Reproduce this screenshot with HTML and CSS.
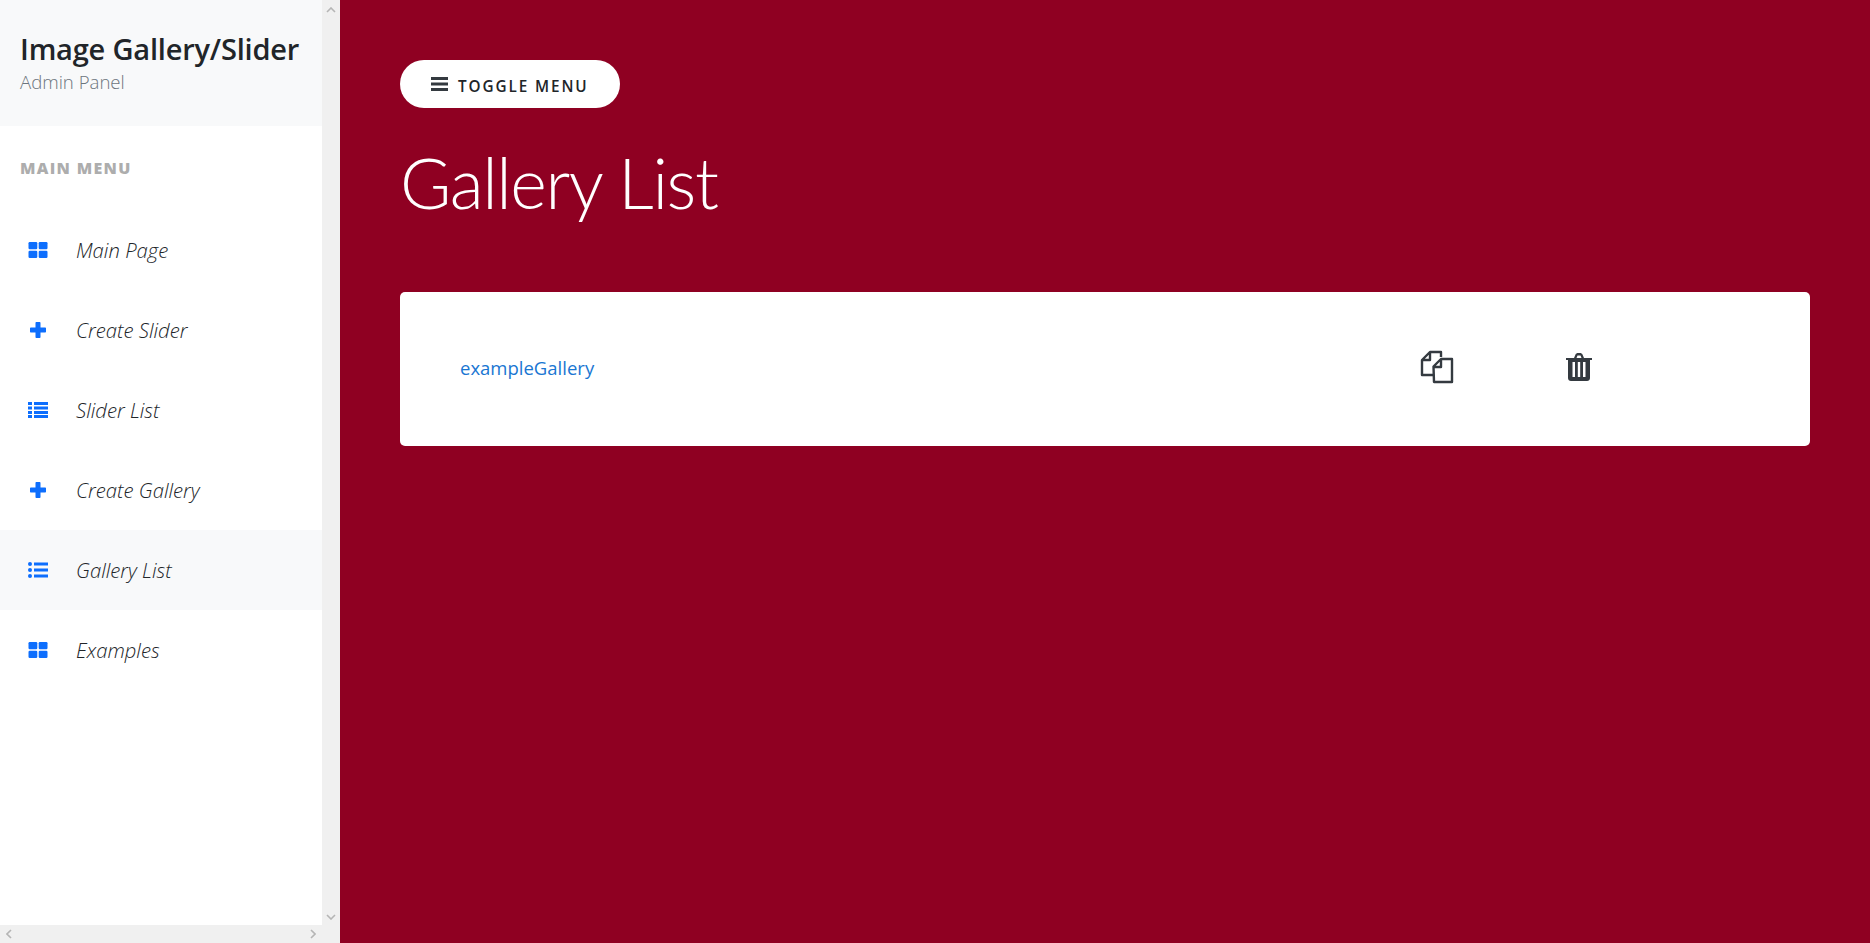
FILE: index.html
```html
<!DOCTYPE html>
<html lang="en">
<head>
    <meta charset="UTF-8">
    <meta name="viewport" content="width=device-width, initial-scale=1.0">
    <title>Gallery List</title>
    <link rel="stylesheet" href="styles.css">
</head>
<body>
    <aside class="sidebar">
        <div class="sidebar-main">
            <div class="sidebar-content">
                <div class="sidebar-header">
                    <h3>Image Gallery/Slider</h3>
                    <span>Admin Panel</span>
                </div>
                <p class="menu-title">MAIN MENU</p>
                <ul class="menu">
                    <li><a href="#"><svg class="menu-icon" viewBox="-0.5 -2 20 20"><rect width="8.800" height="7.300" rx="1.200"/><rect x="10.200" width="8.800" height="7.300" rx="1.200"/><rect y="8.700" width="8.800" height="7.300" rx="1.200"/><rect x="10.200" y="8.700" width="8.800" height="7.300" rx="1.200"/></svg>Main Page</a></li>
                    <li><a href="#"><svg class="menu-icon" viewBox="-2 -2 20 20"><path d="M6.500 0h3c.6 0 1 .4 1 1v4.500H15c.6 0 1 .4 1 1v3c0 .6-.4 1-1 1h-4.500V15c0 .6-.4 1-1 1h-3c-.6 0-1-.4-1-1v-4.500H1c-.6 0-1-.4-1-1v-3c0-.6.4-1 1-1h4.500V1c0-.6.4-1 1-1z"/></svg>Create Slider</a></li>
                    <li><a href="#"><svg class="menu-icon" viewBox="0 -2 20 20"><path d="M0 0h4v3H0zM6 0h14v3H6zM0 4.500h4v3H0zM6 4.500h14v3H6zM0 9h4v3H0zM6 9h14v3H6zM0 13h4v3H0zM6 13h14v3H6z"/></svg>Slider List</a></li>
                    <li><a href="#"><svg class="menu-icon" viewBox="-2 -2 20 20"><path d="M6.500 0h3c.6 0 1 .4 1 1v4.500H15c.6 0 1 .4 1 1v3c0 .6-.4 1-1 1h-4.500V15c0 .6-.4 1-1 1h-3c-.6 0-1-.4-1-1v-4.500H1c-.6 0-1-.4-1-1v-3c0-.6.4-1 1-1h4.500V1c0-.6.4-1 1-1z"/></svg>Create Gallery</a></li>
                    <li class="active"><a href="#"><svg class="menu-icon" viewBox="0 -2 20 20"><circle cx="2" cy="2" r="2"/><circle cx="2" cy="8" r="2"/><circle cx="2" cy="14" r="2"/><path d="M6 .500h14v3H6zM6 6.500h14v3H6zM6 12.500h14v3H6z"/></svg>Gallery List</a></li>
                    <li><a href="#"><svg class="menu-icon" viewBox="-0.5 -2 20 20"><rect width="8.800" height="7.300" rx="1.200"/><rect x="10.200" width="8.800" height="7.300" rx="1.200"/><rect y="8.700" width="8.800" height="7.300" rx="1.200"/><rect x="10.200" y="8.700" width="8.800" height="7.300" rx="1.200"/></svg>Examples</a></li>
                </ul>
            </div>
            <div class="scroll-v">
                <svg class="arrow" viewBox="0 0 10 6"><path d="M1 5l4-4 4 4"/></svg>
                <svg class="arrow" viewBox="0 0 10 6"><path d="M1 1l4 4 4-4"/></svg>
            </div>
        </div>
        <div class="scroll-h">
            <svg class="arrow-side" viewBox="0 0 6 10"><path d="M5 1L1 5l4 4"/></svg>
            <svg class="arrow-side" viewBox="0 0 6 10"><path d="M1 1l4 4-4 4"/></svg>
        </div>
    </aside>

    <main class="content">
        <button class="toggle-button">
            <svg class="bars-icon" viewBox="0 0 17 14"><path d="M0 0h17v3H0zM0 5.500h17v3H0zM0 11h17v3H0z"/></svg>
            <span class="toggle-label">TOGGLE MENU</span>
        </button>
        <h1>Gallery List</h1>
        <div class="gallery-card">
            <a class="gallery-name" href="#">exampleGallery</a>
            <a class="action copy-action" href="#">
                <svg class="copy-icon" viewBox="0 0 34 34"><path d="M21 7V2H10L2 10v15h11.500M10 2v8H2M13.500 16.500L21 9h11v23H14zM21 9v8h-7.500"/></svg>
            </a>
            <a class="action trash-action" href="#">
                <svg class="trash-icon" viewBox="0 0 26 28"><path class="trash-fill" d="M0 5h8l1.500-3.500C10 .5 11 0 12 0h2c1 0 2 .5 2.500 1.500L18 5h8v2h-2v18c0 1.700-1.300 3-3 3H5c-1.700 0-3-1.300-3-3V7H0zm10.500 0h5L14.500 2.500h-3zM6.500 9v15h2.500V9zm5.300 0v15h2.400V9zm5.200 0v15h2.500V9z"/></svg>
            </a>
        </div>
    </main>
</body>
</html>
```

FILE: styles.css
```css
* {
    box-sizing: border-box;
}
body {
    font-family: 'Open Sans', 'Noto Sans', sans-serif;
    background-color: #8f0022;
    display: flex;
    height: 100vh;
    margin: 0;
    overflow: hidden;
}
.sidebar {
    width: 340px;
    flex-shrink: 0;
    display: flex;
    flex-direction: column;
    background-color: #f0f0f0;
}
.sidebar-main {
    flex: 1;
    display: flex;
    min-height: 0;
}
.sidebar-content {
    flex: 1;
    background-color: white;
}
.sidebar-header {
    height: 126px;
    padding: 29px 20px 0;
    background-color: #f8f9fa;
}
.sidebar-header h3 {
    margin: 0;
    font-size: 29px;
    line-height: 40px;
    font-weight: 600;
    letter-spacing: -0.2px;
    color: #212529;
    white-space: nowrap;
}
.sidebar-header span {
    display: block;
    padding-top: 1px;
    font-size: 18.600px;
    line-height: 24px;
    font-weight: 300;
    color: #6c757d;
}
.menu-title {
    margin: 0;
    padding: 32px 20px 0;
    height: 84px;
    font-size: 16px;
    line-height: 20px;
    font-weight: 800;
    letter-spacing: 1.300px;
    color: #adadad;
}
.menu {
    list-style: none;
    margin: 0;
    padding: 0;
}
.menu a {
    height: 80px;
    display: flex;
    align-items: center;
    padding-left: 28px;
    font-size: 20.300px;
    font-style: italic;
    font-weight: 300;
    color: #212529;
    text-decoration: none;
}
.menu .active {
    background-color: #f8f9fa;
}
.menu-icon {
    width: 20px;
    height: 20px;
    margin: 0 28px 0 0;
    fill: #0d6efd;
    flex-shrink: 0;
}
.scroll-v {
    width: 18px;
    display: flex;
    flex-direction: column;
    justify-content: space-between;
    align-items: center;
    padding: 7px 0 5px;
}
.scroll-h {
    height: 18px;
    display: flex;
    justify-content: space-between;
    align-items: center;
    padding: 0 24px 0 6px;
}
.arrow {
    width: 10px;
    height: 6px;
    fill: none;
    stroke: #b5b5b5;
    stroke-width: 1.600;
}
.arrow-side {
    width: 6px;
    height: 10px;
    fill: none;
    stroke: #b5b5b5;
    stroke-width: 1.600;
}
.content {
    flex: 1;
    padding: 60px;
}
.toggle-button {
    width: 220px;
    height: 48px;
    display: flex;
    align-items: center;
    gap: 10px;
    padding: 0 0 0 31px;
    border: none;
    border-radius: 24px;
    background-color: white;
    font-family: inherit;
    font-size: 15.300px;
    font-weight: 600;
    letter-spacing: 1.900px;
    color: #212529;
    cursor: pointer;
}
.toggle-label {
    padding-top: 3px;
}
.bars-icon {
    width: 17px;
    height: 14px;
    fill: #343a40;
}
.content h1 {
    margin: 14px 0 0;
    height: 115px;
    font-family: 'Lato', 'Open Sans', sans-serif;
    font-size: 70px;
    line-height: 120px;
    font-weight: 300;
    letter-spacing: -1.400px;
    color: white;
}
.gallery-card {
    height: 154px;
    margin-top: 55px;
    display: flex;
    align-items: center;
    padding-left: 60px;
    background-color: white;
    border-radius: 5px;
}
.gallery-name {
    width: 960px;
    margin-bottom: 4px;
    font-size: 18.500px;
    color: #1976d2;
    text-decoration: none;
}
.action {
    display: flex;
    margin-bottom: 4px;
}
.copy-action {
    margin-right: 112px;
}
.copy-icon {
    width: 34px;
    height: 34px;
    fill: none;
    stroke: #343a40;
    stroke-width: 2.400;
    stroke-linejoin: round;
}
.trash-icon {
    width: 26px;
    height: 28px;
}
.trash-fill {
    fill: #343a40;
    fill-rule: evenodd;
}
```
